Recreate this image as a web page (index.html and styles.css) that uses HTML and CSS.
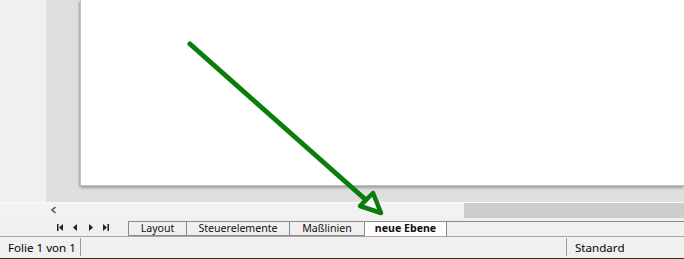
FILE: index.html
```html
<!DOCTYPE html>
<html>
<head>
<meta charset="utf-8">
<link rel="stylesheet" href="styles.css">
</head>
<body>
<div class="app">
  <div class="main">
    <div class="sidebar"></div>
    <div class="canvas">
      <div class="slide"></div>
    </div>
  </div>
  <div class="scrollrow">
    <div class="scroll-left">
      <svg width="8" height="8" viewBox="0 0 8 8"><path d="M5.5 1 L2 4 L5.5 7" fill="none" stroke="#505050" stroke-width="1.6"/></svg>
    </div>
    <div class="scroll-track"></div>
  </div>
  <div class="tabrow">
    <div class="nav">
      <svg width="7" height="7" viewBox="0 0 7 7"><rect x="0" y="0" width="1.5" height="7" fill="#222"/><path d="M6 0 L2 3.5 L6 7 Z" fill="#222"/></svg>
      <svg width="7" height="7" viewBox="0 0 7 7"><path d="M5 0 L1 3.5 L5 7 Z" fill="#222"/></svg>
      <svg width="7" height="7" viewBox="0 0 7 7"><path d="M2 0 L6 3.5 L2 7 Z" fill="#222"/></svg>
      <svg width="7" height="7" viewBox="0 0 7 7"><path d="M1 0 L5 3.5 L1 7 Z" fill="#222"/><rect x="5.5" y="0" width="1.5" height="7" fill="#222"/></svg>
    </div>
    <div class="tabs">
      <div class="tab tab-layout">Layout</div>
      <div class="tab tab-steuer">Steuerelemente</div>
      <div class="tab tab-mass">Maßlinien</div>
      <div class="tab tab-active">neue Ebene</div>
      <div class="tab-fill"></div>
    </div>
  </div>
  <div class="status">
    <div class="status-cell cell-slide">Folie 1 von 1</div>
    <div class="status-gap"></div>
    <div class="status-cell cell-layout">Standard</div>
  </div>
  <svg class="arrow" width="684" height="259" viewBox="0 0 684 259">
    <line x1="190" y1="44" x2="366" y2="200" stroke="#0b7d0b" stroke-width="5" stroke-linecap="round"/>
    <path d="M373 193 L360 206 L381 213 Z" fill="#ffffff" fill-opacity="0.7" stroke="#0b7d0b" stroke-width="4.5" stroke-linejoin="round"/>
  </svg>
</div>
</body>
</html>
```
FILE: styles.css
```css
* { box-sizing: border-box; }
html, body {
  margin: 0;
  padding: 0;
  width: 684px;
  height: 259px;
  overflow: hidden;
  background: #f0f0f0;
  font-family: "Noto Sans", "Open Sans", sans-serif;
  color: #000;
}
.app {
  position: relative;
  width: 684px;
  height: 259px;
  display: flex;
  flex-direction: column;
}
.main {
  display: flex;
  height: 203px;
  border-bottom: 1px solid #fbfbfb;
}
.sidebar {
  width: 46px;
  background: #f0f0f0;
  border-right: 1px solid #f6f6f6;
}
.canvas {
  flex: 1;
  background: #dfdfdf;
  padding-left: 35px;
}
.slide {
  height: 185px;
  background: #ffffff;
  box-shadow: -1px 1px 0 #c0c0c0, -2px 2px 2px #a5a5a5, 0 3px 3px #a8a8a8;
}
.scrollrow {
  display: flex;
  height: 15px;
  background: #f0f0f0;
}
.scroll-left {
  width: 464px;
  padding-left: 50px;
  padding-top: 3px;
  background: #f2f2f2;
}
.scroll-left svg { display: block; }
.scroll-track {
  flex: 1;
  background: #cdcdcd;
}
.tabrow {
  display: flex;
  height: 19px;
  padding-top: 3px;
  border-bottom: 1px solid #a5a5a5;
  background: #f0f0f0;
}
.nav {
  width: 128px;
  display: flex;
  gap: 8px;
  padding-left: 57px;
  padding-top: 3px;
}
.nav svg { display: block; }
.tabs {
  flex: 1;
  display: flex;
  height: 15px;
}
.tab {
  height: 15px;
  border: 1px solid #8a8a8a;
  border-right: none;
  font-size: 10.6px;
  line-height: 13px;
  text-align: center;
  background: #f0f0f0;
  color: #111;
}
.tab-layout { width: 58px; }
.tab-steuer { width: 103px; }
.tab-mass { width: 75px; }
.tab-active {
  width: 83px;
  background: #ffffff;
  font-weight: bold;
  border-bottom: none;
  border-right: 1px solid #8a8a8a;
}
.tab-fill {
  flex: 1;
  border-top: 1px solid #8a8a8a;
}
.status {
  display: flex;
  height: 22px;
  border-bottom: 1px solid #2c352c;
  background: #f0f0f0;
  font-size: 11.6px;
}
.status-cell {
  padding-top: 1px;
}
.cell-slide {
  width: 81px;
  padding-left: 8px;
  border-right: 1px solid #9a9a9a;
  margin: 1px 0 2px 0;
  line-height: 18px;
}
.status-gap {
  width: 485px;
}
.cell-layout {
  flex: 1;
  padding-left: 8px;
  border-left: 1px solid #9a9a9a;
  margin: 1px 0 2px 0;
  line-height: 18px;
}
.arrow {
  position: absolute;
  left: 0;
  top: 0;
  pointer-events: none;
}
```
